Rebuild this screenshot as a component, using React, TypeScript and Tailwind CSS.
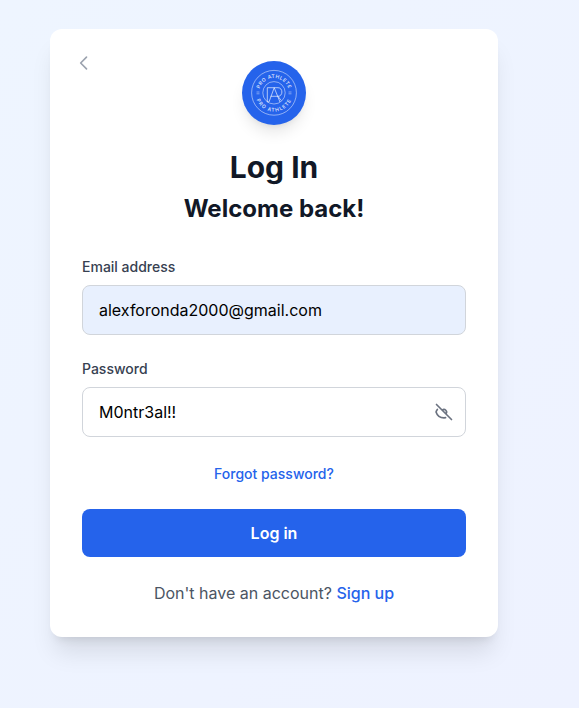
import React, { useState } from "react";

function Logo() {
  return (
    <div className="h-16 w-16 rounded-full bg-[#2563eb] shadow-lg">
      <svg viewBox="0 0 64 64" className="h-16 w-16" fill="none" stroke="#fff" strokeOpacity="0.7">
        <defs>
          <path id="ring-top" d="M17 32a15 15 0 0 1 30 0" />
          <path id="ring-bottom" d="M13.4 32a18.6 18.6 0 0 0 37.2 0" />
        </defs>
        <circle cx="32" cy="31.8" r="22.4" strokeWidth="0.7" />
        <circle cx="32" cy="31.8" r="11.2" strokeWidth="0.7" />
        <g fill="#fff" fillOpacity="0.8" stroke="none" fontFamily="Inter, sans-serif" fontSize="5" fontWeight="600" textAnchor="middle">
          <text letterSpacing="0.4">
            <textPath href="#ring-top" startOffset="50%">PRO ATHLETE</textPath>
          </text>
          <text letterSpacing="0.95">
            <textPath href="#ring-bottom" startOffset="50%">PRO ATHLETE</textPath>
          </text>
        </g>
        <path d="M14.5 31h3M14.5 32.8h3M46.5 31h3M46.5 32.8h3" strokeWidth="0.6" />
        <path
          d="M25.3 41V26.7H36c5.2 0 5.2 8.6 0 8.6h-7.5M27 41l5.2-14.3L38 41M36 35.3l3.2 4.2M25.3 41H27"
          strokeWidth="0.9"
        />
      </svg>
    </div>
  );
}

export default function App() {
  const [email, setEmail] = useState("alexforonda2000@gmail.com");
  const [password, setPassword] = useState("M0ntr3al!!");

  return (
    <div className="flex h-[708px] items-start bg-[linear-gradient(to_bottom_right,#eef5ff,#eef2ff)] pl-[50px] pt-[29px] font-['Inter',sans-serif]">
      <main className="relative flex h-[608px] w-[448px] flex-col rounded-xl bg-white p-8 shadow-xl">
        <button type="button" aria-label="Back" className="absolute left-4 top-4 p-2 text-[#9ca3af]">
          <svg className="h-5 w-5" viewBox="0 0 24 24" fill="none" stroke="currentColor" strokeWidth="2" strokeLinecap="round" strokeLinejoin="round">
            <path d="M15 19l-7-7 7-7" />
          </svg>
        </button>
        <header className="flex flex-col items-center text-[#111827]">
          <Logo />
          <h1 className="mt-6 text-3xl font-bold leading-9">Log In</h1>
          <h2 className="mt-2 text-2xl font-bold leading-8">Welcome back!</h2>
        </header>
        <form className="mt-8 flex flex-col">
          <label htmlFor="email" className="mb-2 text-sm font-medium text-[#374151]">Email address</label>
          <input
            id="email"
            value={email}
            onChange={(e) => setEmail(e.target.value)}
            className="h-[50px] rounded-lg border border-[#d1d5db] bg-[#e8f0fe] px-4 text-base text-black"
          />
          <label htmlFor="password" className="mb-2 mt-6 text-sm font-medium text-[#374151]">Password</label>
          <div className="relative">
            <input
              id="password"
              value={password}
              onChange={(e) => setPassword(e.target.value)}
              className="h-[50px] w-full rounded-lg border border-[#d1d5db] bg-white px-4 text-base text-black"
            />
            <button type="button" aria-label="Hide password" className="absolute inset-y-0 right-3 flex items-center text-[#6b7280]">
              <svg className="h-5 w-5" viewBox="0 0 24 24" fill="none" stroke="currentColor" strokeWidth="2" strokeLinecap="round" strokeLinejoin="round">
                <path d="M13.875 18.825A10.05 10.05 0 0112 19c-4.478 0-8.268-2.943-9.543-7a9.97 9.97 0 011.563-3.029m5.858.908a3 3 0 114.243 4.243M9.878 9.878l4.242 4.242M9.878 9.878L3 3m6.878 6.878L21 21" />
              </svg>
            </button>
          </div>
          <a href="#" className="mt-[27px] self-center text-sm font-medium text-[#2563eb]">Forgot password?</a>
          <button type="button" className="mt-[25px] h-12 rounded-lg bg-[#2563eb] text-base font-semibold text-white">Log in</button>
        </form>
        <p className="mt-6 text-center text-base text-[#4b5563]">
          Don't have an account? <a href="#" className="font-medium text-[#2563eb]">Sign up</a>
        </p>
      </main>
    </div>
  );
}
